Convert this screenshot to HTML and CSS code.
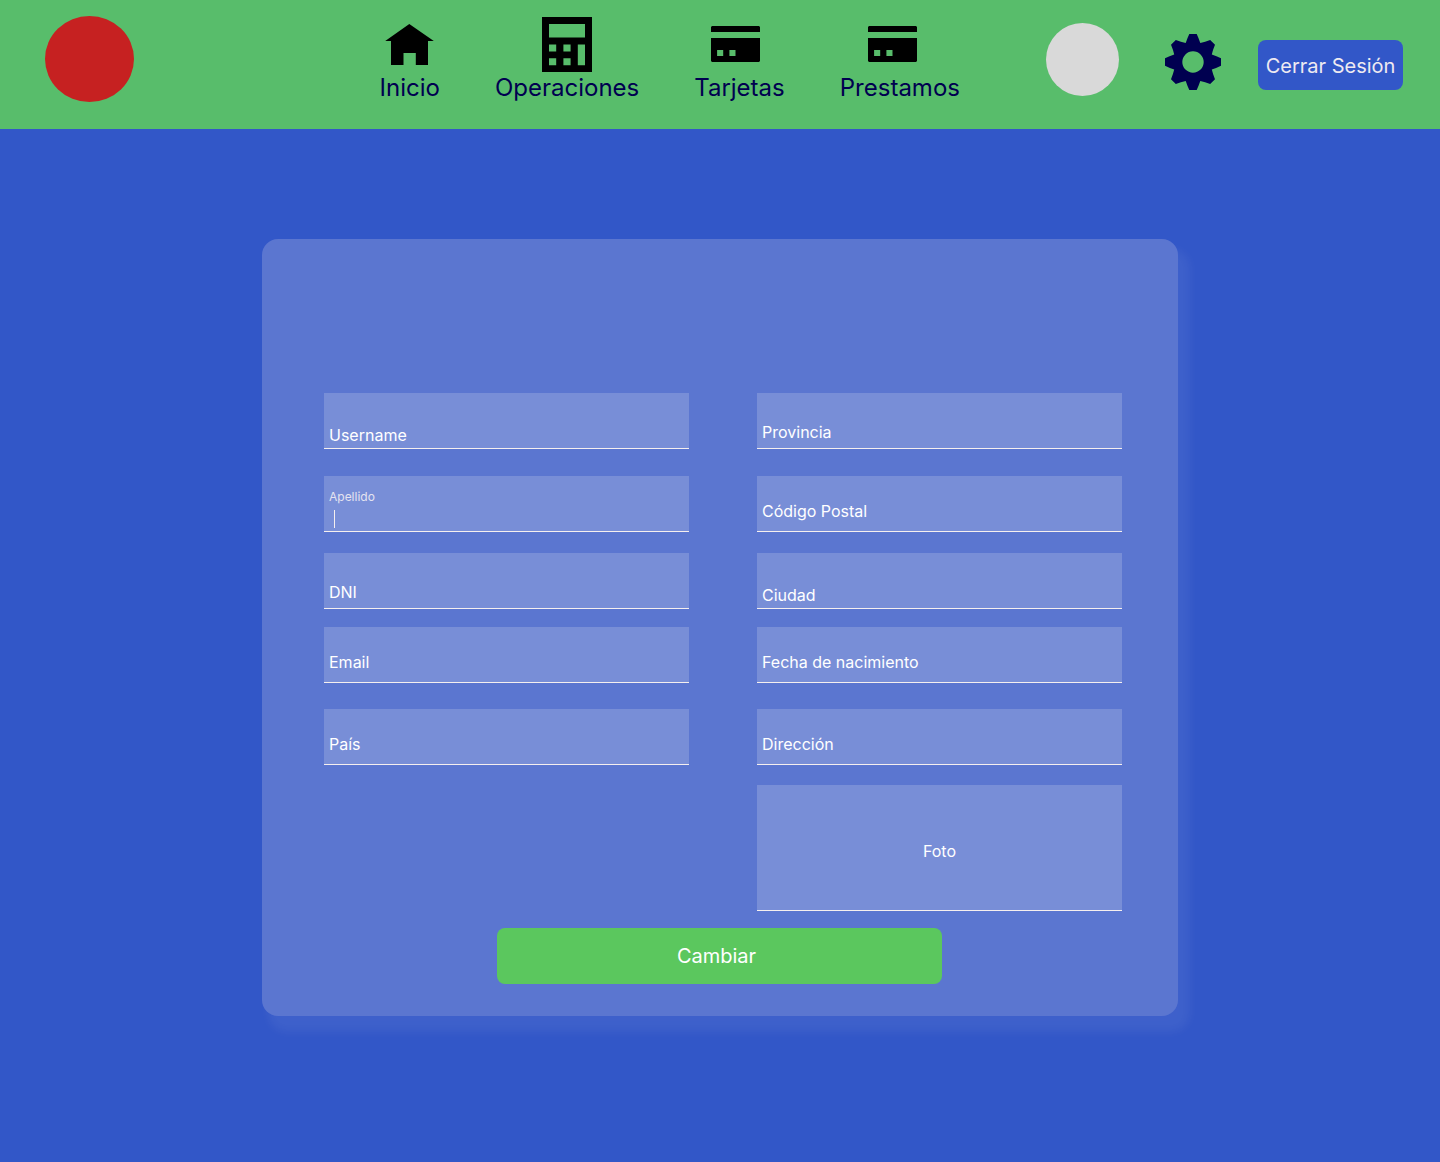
FILE: index.html
```html
<!DOCTYPE html>
<html lang="es">
<head>
<meta charset="utf-8">
<title>Perfil</title>
<link rel="stylesheet" href="styles.css">
</head>
<body>
<header class="header">
  <div class="logo"></div>
  <nav class="nav">
    <a class="nav-item">
      <svg class="icon-home" width="49" height="41" viewBox="0 0 49 41"><path d="M24.3 0 48.8 17H43v24H30.8V29H18.5v12H6V17H.2z"/></svg>
      <span>Inicio</span>
    </a>
    <a class="nav-item">
      <svg class="icon-calc" width="50" height="55" viewBox="0 0 50 55"><path fill-rule="evenodd" d="M0 0h50v55H0zM7 7v13.5h36V7zM7 27.5v7h7.2v-7zM21.4 27.5v7h7.2v-7zM7 41.2v7h7.2v-7zM21.4 41.2v7h7.2v-7zM35.8 27.5v20.7H43V27.5z"/></svg>
      <span>Operaciones</span>
    </a>
    <a class="nav-item">
      <svg class="icon-card" width="49" height="36" viewBox="0 0 49 36"><path fill-rule="evenodd" d="M1 0h47l1 1v5H0V1zM0 12h49v23l-1 1H1l-1-1zM6.1 24v6h6.1v-6zM18.4 24v6h6.1v-6z"/></svg>
      <span>Tarjetas</span>
    </a>
    <a class="nav-item">
      <svg class="icon-card icon-loan" width="49" height="36" viewBox="0 0 49 36"><path fill-rule="evenodd" d="M1 0h47l1 1v5H0V1zM0 12h49v23l-1 1H1l-1-1zM6.1 24v6h6.1v-6zM18.4 24v6h6.1v-6z"/></svg>
      <span>Prestamos</span>
    </a>
  </nav>
  <div class="avatar"></div>
  <svg class="gear" width="56" height="56" viewBox="-28 -28 56 56"><path fill-rule="evenodd" d="M-3.7-28H3.7Q5.4-24.5 7.3-19 12-20.2 17.2-22L22-17.2Q20-12.5 18.8-7.5 23.5-6 28-3.7V3.7Q23.5 6 18.8 7.5 20 12.5 22 17.2L17.2 22Q12 20.2 7.3 19 5.4 24.5 3.7 28H-3.7Q-5.4 24.5-7.3 19-12 20.2-17.2 22L-22 17.2Q-20 12.5-18.8 7.5-23.5 6-28 3.7V-3.7Q-23.5-6-18.8-7.5-20-12.5-22-17.2L-17.2-22Q-12-20.2-7.3-19-5.4-24.5-3.7-28zM0-10.7a10.7 10.7 0 1 0 0 21.4 10.7 10.7 0 1 0 0-21.4z"/></svg>
  <button class="logout">Cerrar Sesión</button>
</header>
<main class="main">
  <form class="card">
    <div class="fields">
      <label class="field low">Username</label>
      <label class="field mid">Provincia</label>
      <label class="field active"><span>Apellido</span><i class="caret"></i></label>
      <label class="field">Código Postal</label>
      <label class="field mid">DNI</label>
      <label class="field low">Ciudad</label>
      <label class="field">Email</label>
      <label class="field">Fecha de nacimiento</label>
      <label class="field">País</label>
      <label class="field">Dirección</label>
      <label class="field photo">Foto</label>
    </div>
    <button class="submit" type="button">Cambiar</button>
  </form>
</main>
</body>
</html>
```
FILE: styles.css
```css
* { box-sizing: border-box; }

body {
  margin: 0;
  min-height: 1162px;
  background: #3257c8;
  font-family: Inter, "Liberation Sans", sans-serif;
}

button {
  border: 0;
  border-radius: 8px;
  font: 400 20px/24px Inter, "Liberation Sans", sans-serif;
  color: #eeeaf1;
}

.header {
  display: flex;
  align-items: flex-start;
  height: 129px;
  padding-left: 45px;
  background: #58bd6b;
}

.logo {
  width: 89px;
  height: 86px;
  margin-top: 16px;
  border-radius: 50%;
  background: #c62121;
}

.nav {
  display: grid;
  grid-template-columns: 61px 145px 91px 121px;
  column-gap: 54.4px;
  width: 912px;
  padding: 17px 0 0 245.2px;
}

.nav-item {
  display: grid;
  grid-template-rows: 56px 30px;
  justify-items: center;
  font-size: 24px;
  line-height: 30px;
  color: #000050;
}

.nav-item svg { fill: #000; }
.icon-home { margin-top: 7px; }
.icon-card { margin: 9px 8px 0 0; }
.icon-loan { margin-right: 15px; }

.avatar {
  width: 73px;
  height: 73px;
  margin-top: 23px;
  border-radius: 50%;
  background: #d9d9d9;
}

.gear {
  margin: 34px 37px 0 46px;
  fill: #000050;
}

.logout {
  width: 145px;
  height: 50px;
  margin-top: 40px;
  padding: 2px 0 0;
  background: #3257c8;
}

.main {
  display: flex;
  justify-content: center;
  padding-top: 110px;
}

.card {
  width: 916px;
  height: 777px;
  padding: 154px 56px 0 62px;
  border-radius: 16px;
  background: #5b76d0;
  box-shadow: 9px 13px 10px 3px rgba(255, 255, 255, .06);
}

.fields {
  display: grid;
  grid-template-columns: 365px 365px;
  grid-template-rows: 83px 77px 74px 82px 76px 126px;
  column-gap: 68px;
}

.field {
  height: 56px;
  padding: 25px 5px 0;
  border-bottom: 1px solid #f5efef;
  background: #788ed7;
  font-size: 16px;
  line-height: 20px;
  color: #fff;
}

.field.mid { padding-top: 29px; }
.field.low { padding-top: 32px; }

.field.active {
  display: flex;
  flex-direction: column;
  padding-top: 13px;
  font-size: 12px;
  line-height: 16px;
  color: #e4e3f0;
}

.caret {
  width: 1px;
  height: 18px;
  margin: 5px 0 0 5px;
  background: #f5efef;
}

.field.photo {
  grid-column: 2;
  height: 126px;
  padding-top: 56px;
  text-align: center;
}

.submit {
  display: block;
  width: 445px;
  height: 56px;
  margin: 17px 0 0 173px;
  padding: 0 6px 0 0;
  background: #5bc75e;
  color: #fff;
}
```
